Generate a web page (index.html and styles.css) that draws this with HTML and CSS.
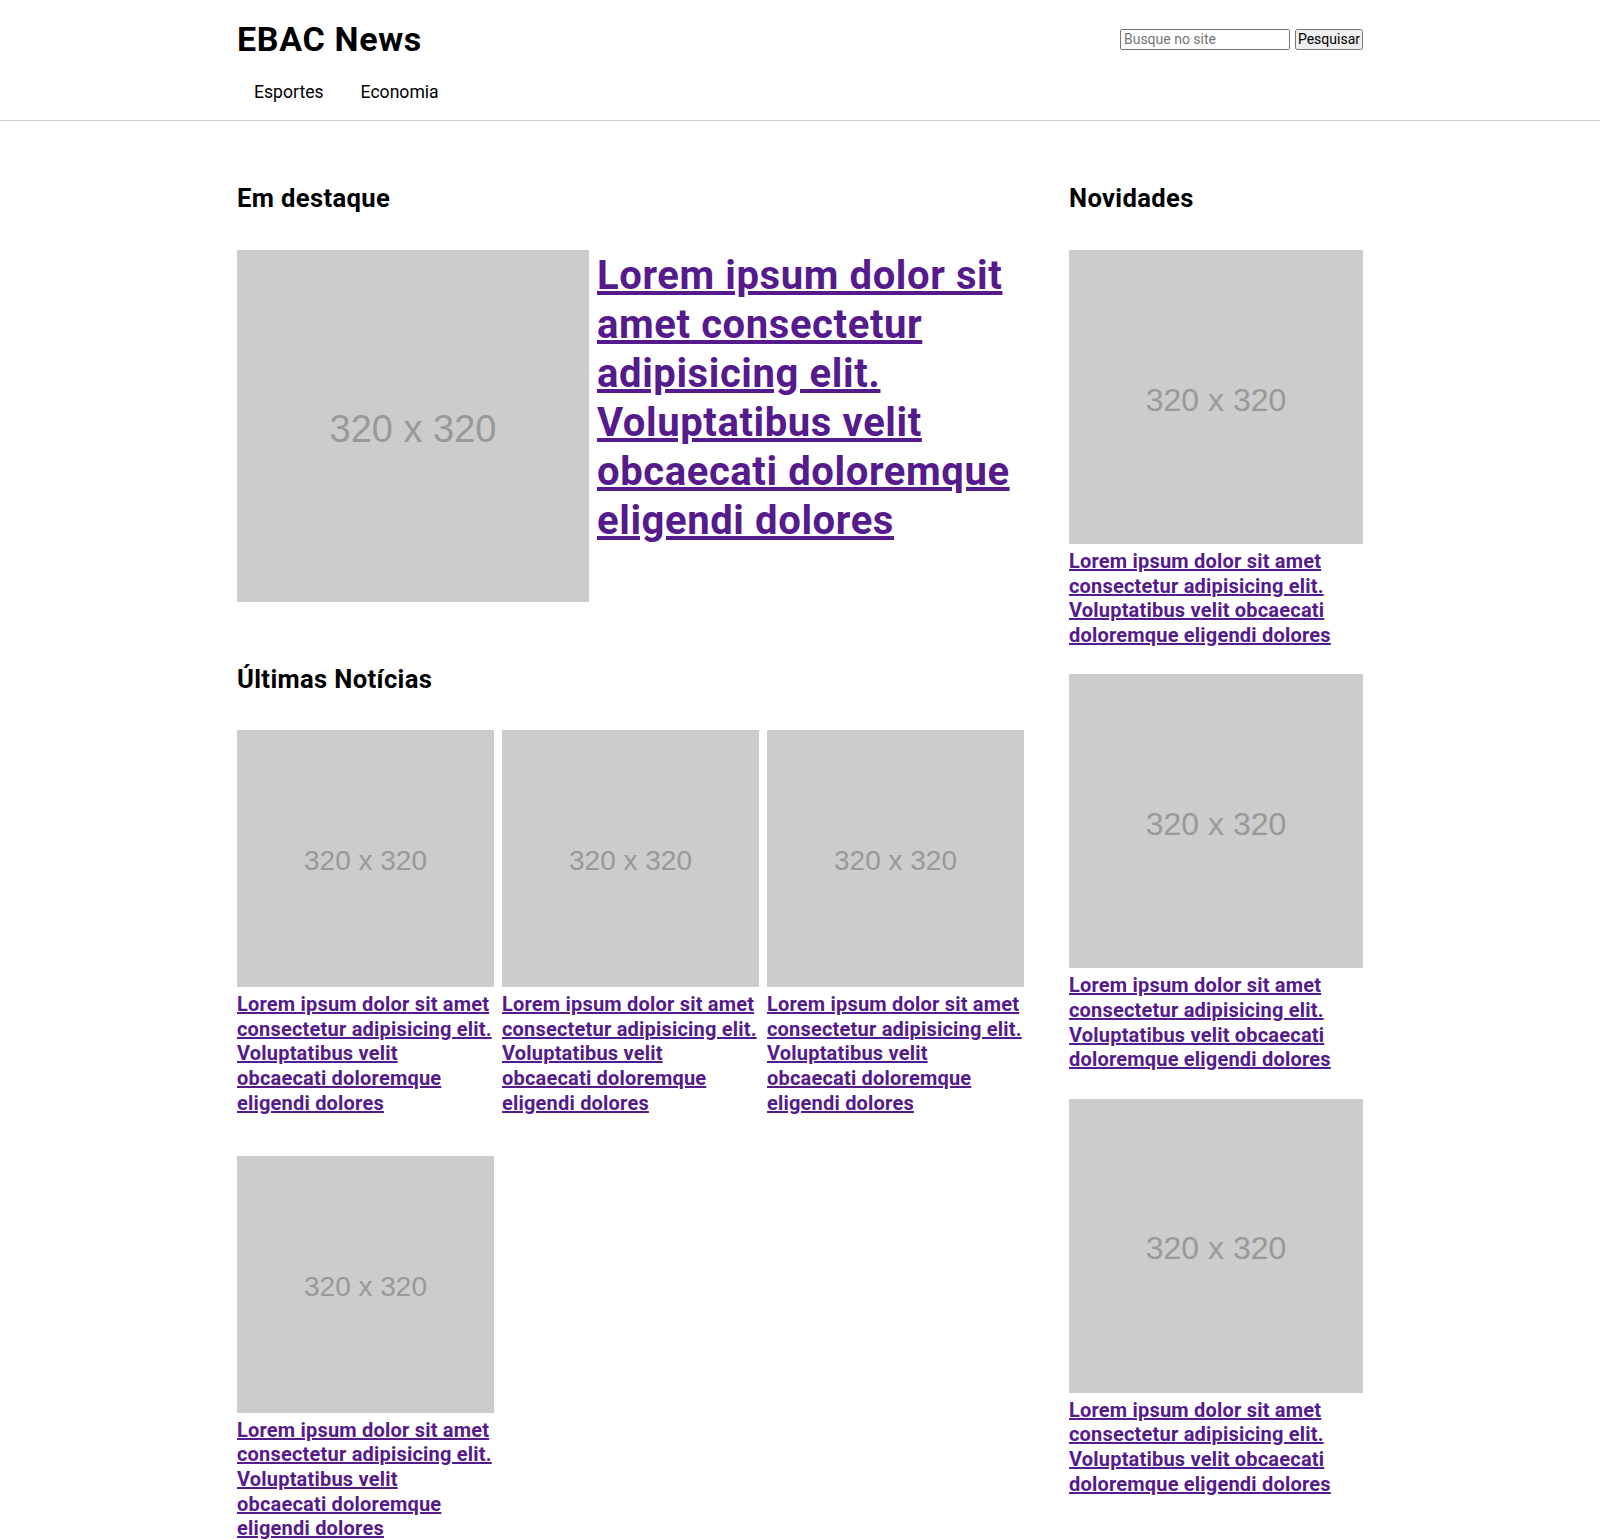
FILE: index.html
```html
<!DOCTYPE html>
<html lang="pt-BR">
<head>
<meta charset="UTF-8">
<title>EBAC News</title>
<link rel="stylesheet" href="styles.css">
</head>
<body>
<header class="site-header">
  <div class="container">
    <div class="header-top">
      <h1 class="logo">EBAC News</h1>
      <form class="search">
        <input class="search-input" type="text" placeholder="Busque no site">
        <button class="search-button" type="button">Pesquisar</button>
      </form>
    </div>
    <nav class="menu">
      <a class="menu-link" href="#">Esportes</a>
      <a class="menu-link" href="#">Economia</a>
    </nav>
  </div>
</header>

<main class="container content">
  <div class="main-col">
    <section class="featured">
      <h2 class="section-title">Em destaque</h2>
      <div class="featured-body">
        <div class="ph ph-lg"><span>320 x 320</span></div>
        <a class="featured-title" href="#">Lorem ipsum dolor sit amet consectetur adipisicing elit. Voluptatibus velit obcaecati doloremque eligendi dolores</a>
      </div>
    </section>

    <section class="latest">
      <h2 class="section-title">Últimas Notícias</h2>
      <div class="news-grid">
        <article class="card">
          <div class="ph ph-sm"><span>320 x 320</span></div>
          <a class="card-link" href="#">Lorem ipsum dolor sit amet consectetur adipisicing elit. Voluptatibus velit obcaecati&nbsp;doloremque eligendi dolores</a>
        </article>
        <article class="card">
          <div class="ph ph-sm"><span>320 x 320</span></div>
          <a class="card-link" href="#">Lorem ipsum dolor sit amet consectetur adipisicing elit. Voluptatibus velit obcaecati&nbsp;doloremque eligendi dolores</a>
        </article>
        <article class="card">
          <div class="ph ph-sm"><span>320 x 320</span></div>
          <a class="card-link" href="#">Lorem ipsum dolor sit amet consectetur adipisicing elit. Voluptatibus velit obcaecati&nbsp;doloremque eligendi dolores</a>
        </article>
        <article class="card">
          <div class="ph ph-sm"><span>320 x 320</span></div>
          <a class="card-link" href="#">Lorem ipsum dolor sit amet consectetur adipisicing elit. Voluptatibus velit obcaecati&nbsp;doloremque eligendi dolores</a>
        </article>
      </div>
    </section>
  </div>

  <aside class="sidebar">
    <h2 class="section-title">Novidades</h2>
    <div class="side-list">
      <article class="card">
        <div class="ph ph-md"><span>320 x 320</span></div>
        <a class="card-link" href="#">Lorem ipsum dolor sit amet consectetur adipisicing elit. Voluptatibus velit obcaecati doloremque eligendi dolores</a>
      </article>
      <article class="card">
        <div class="ph ph-md"><span>320 x 320</span></div>
        <a class="card-link" href="#">Lorem ipsum dolor sit amet consectetur adipisicing elit. Voluptatibus velit obcaecati doloremque eligendi dolores</a>
      </article>
      <article class="card">
        <div class="ph ph-md"><span>320 x 320</span></div>
        <a class="card-link" href="#">Lorem ipsum dolor sit amet consectetur adipisicing elit. Voluptatibus velit obcaecati doloremque eligendi dolores</a>
      </article>
    </div>
  </aside>
</main>
</body>
</html>
```

FILE: styles.css
```css
* {
  box-sizing: border-box;
}

body {
  margin: 0;
  font-family: Roboto, "Liberation Sans", sans-serif;
  color: #000;
  background: #fff;
}

.container {
  width: 1126px;
  margin: 0 auto;
}

/* Header */
.site-header {
  padding: 20px 0 17px;
  border-bottom: 1px solid #ccc;
}

.header-top {
  display: flex;
  justify-content: space-between;
  align-items: center;
  height: 38px;
}

.logo {
  margin: 0;
  font-size: 34px;
  font-weight: 700;
  letter-spacing: 0.02em;
  line-height: 38px;
}

.search {
  display: flex;
  gap: 5px;
  align-items: center;
}

.search-input {
  width: 170px;
  height: 21px;
  font-family: Roboto, sans-serif;
  font-size: 14px;
  padding: 0 2px;
}

.search-button {
  height: 21px;
  font-family: Roboto, sans-serif;
  font-size: 14px;
  padding: 0 1px;
}

.menu {
  display: flex;
  gap: 4px;
  margin-top: 24px;
}

.menu-link {
  padding: 0 16px 0 17px;
  font-size: 17.6px;
  line-height: 21px;
  color: #000;
  text-decoration: none;
}

/* Content */
.content {
  display: flex;
  gap: 45px;
  padding-top: 62px;
}

.main-col {
  width: 787px;
}

.sidebar {
  width: 294px;
}

.section-title {
  margin: 0 0 37px;
  font-size: 25.6px;
  font-weight: 700;
  letter-spacing: 0.014em;
  line-height: 30px;
}

.latest {
  margin-top: 62px;
}

.latest .section-title {
  margin-bottom: 36px;
}

.featured-body {
  display: flex;
  gap: 8px;
  align-items: flex-start;
}

.featured-title {
  flex: 1;
  padding-top: 1px;
  font-size: 40px;
  font-weight: 700;
  letter-spacing: 0.6px;
  line-height: 49px;
  color: #551a8b;
}

/* Placeholder images */
.ph {
  display: flex;
  align-items: center;
  justify-content: center;
  aspect-ratio: 1 / 1;
  background: #ccc;
  color: #999;
  font-family: "Liberation Sans", Arial, sans-serif;
  flex-shrink: 0;
}

.ph span {
  padding-top: 0.2em;
}

.ph-lg {
  width: 352px;
  font-size: 38px;
}

.ph-md {
  width: 100%;
  font-size: 32px;
}

.ph-sm {
  width: 100%;
  font-size: 28px;
}

/* Cards */
.news-grid {
  display: grid;
  grid-template-columns: repeat(3, 1fr);
  column-gap: 8px;
  row-gap: 40px;
}

.side-list {
  display: flex;
  flex-direction: column;
  gap: 26.5px;
}

.card-link {
  display: block;
  margin-top: 5px;
  font-size: 20px;
  font-weight: 700;
  letter-spacing: 0.2px;
  line-height: 24.7px;
  color: #551a8b;
}
```
